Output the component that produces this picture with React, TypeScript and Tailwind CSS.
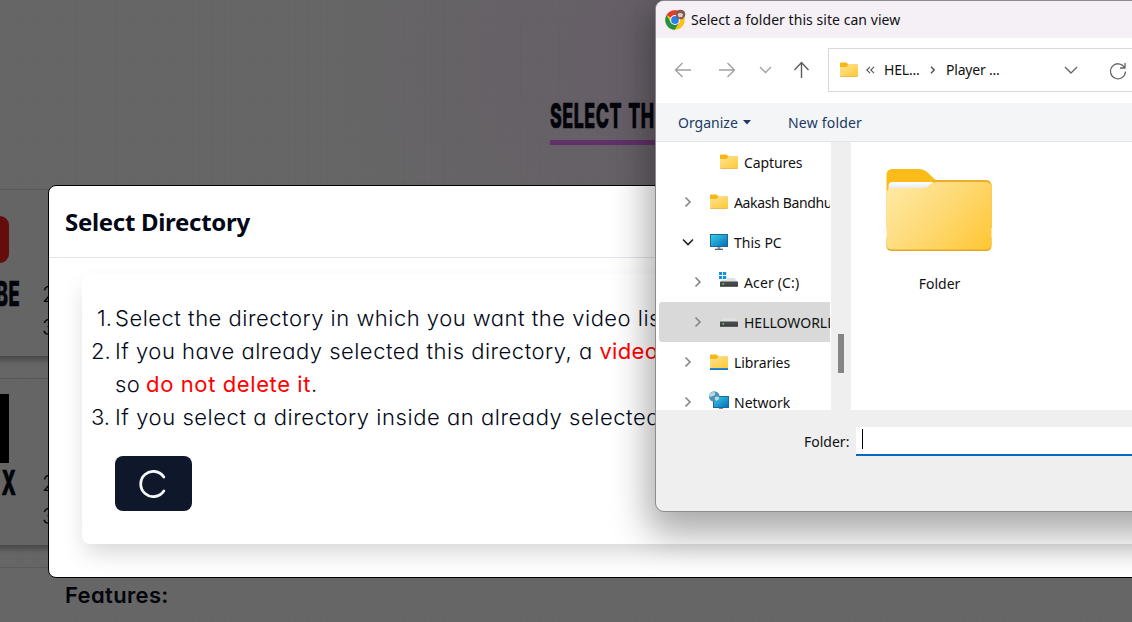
import React from 'react';

const ui = "font-['Noto_Sans','Open_Sans',sans-serif]";
const geo = "font-['Inter',sans-serif]";

function SmallFolder({ library = false }: { library?: boolean }) {
  return (
    <svg width="19" height="16" viewBox="0 0 19 16" className="shrink-0">
      <defs>
        <linearGradient id="sf" x1="0" y1="0" x2="1" y2="1">
          <stop offset="0" stopColor="#ffe391" />
          <stop offset="1" stopColor="#fdc936" />
        </linearGradient>
      </defs>
      <path d="M0 1.5Q0 .5 1 .5h5.500l2 2H17.500q.5 0 .5.5v3H0z" fill="#f7b71a" />
      <path d="M0 5h6.500l2-2.200H18V13q0 1-1 1H1q-1 0-1-1z" fill="url(#sf)" />
      <path d="M0 13q0 1 1 1h16q1 0 1-1v.9q0 .8-1 .8H1q-1 0-1-.8z" fill="#e3a21f" />
      {library && <path d="M0 14.200h18V16H0z" fill="#0a78d0" />}
    </svg>
  );
}

function BigFolder() {
  return (
    <svg width="108" height="86" viewBox="0 0 108 86">
      <defs>
        <linearGradient id="bf" gradientUnits="userSpaceOnUse" x1="10" y1="10" x2="95" y2="88">
          <stop offset="0" stopColor="#ffe9a5" />
          <stop offset=".5" stopColor="#fed973" />
          <stop offset="1" stopColor="#ffc735" />
        </linearGradient>
        <linearGradient id="bp" x1="0" y1="0" x2="0" y2="1">
          <stop offset="0" stopColor="#ffffff" />
          <stop offset="1" stopColor="#dfe3e8" />
        </linearGradient>
      </defs>
      <path d="M.5 7q0-6 6-6h27q4 0 7 2.500l8 7.500q2 1.500 5 1.500h46q6 0 6 6V60H.5z" fill="#fbbb18" />
      <path d="M47 12h53q5 0 5.500 5.500V60H40z" fill="#ebad2b" />
      <path d="M2.500 18q0-4 4-4h41l-9 8h-36z" fill="url(#bp)" />
      <path d="M.5 70h105v7.500q0 5.500-5.500 5.500H6q-5.500 0-5.500-5.500z" fill="#e6a626" />
      <path d="M.5 26q0-6 6-6h30q4 0 6-2l3-2.200q2-1.800 5-1.800h49q6 0 6 6v56q0 5.500-5.500 5.500H6q-5.500 0-5.500-5.500z" fill="url(#bf)" />
    </svg>
  );
}

function Monitor() {
  return (
    <svg width="19" height="17" viewBox="0 0 19 17" className="shrink-0">
      <defs>
        <linearGradient id="mon" x1="0" y1="0" x2="1" y2="1">
          <stop offset="0" stopColor="#35d3e4" />
          <stop offset="1" stopColor="#0c68bd" />
        </linearGradient>
      </defs>
      <rect x=".5" y=".5" width="17" height="12" fill="url(#mon)" stroke="#17699a" />
      <path d="M7.500 13h3v2h-3z" fill="#8d9aa5" />
      <path d="M5 14.800h8v1.200H5z" fill="#58656f" />
    </svg>
  );
}

function Drive({ windows = false }: { windows?: boolean }) {
  return (
    <svg width="19" height="18" viewBox="0 0 19 18" className="-mt-1 shrink-0 overflow-visible">
      <path d="M3.500 7h11l3.500 4H0z" fill="#dfe2e5" />
      <rect x="0" y="10.500" width="18" height="5" rx=".6" fill="#47494b" />
      <path d="M0 14.500h18v1H0z" fill="#2f3133" />
      <rect x="2.500" y="12.200" width="1.600" height="1.600" fill="#55e05c" />
      {windows && (
        <g>
          <rect x="-1" y="0" width="8" height="9" fill="#fff" />
          <path d="M-1 1h3.200v3H-1zM3 1h3.200v3H3zM-1 5h3.200v3H-1zM3 5h3.200v3H3z" fill="#1490df" />
        </g>
      )}
    </svg>
  );
}

function NetworkIcon() {
  return (
    <svg width="20" height="18" viewBox="0 0 20 18" className="-ml-px -mt-1 shrink-0">
      <defs>
        <linearGradient id="net" x1="0" y1="0" x2="1" y2="1">
          <stop offset="0" stopColor="#35d3e4" />
          <stop offset="1" stopColor="#0c68bd" />
        </linearGradient>
      </defs>
      <rect x="4.500" y="5.500" width="15" height="11" fill="url(#net)" stroke="#17699a" />
      <rect x="10" y="17" width="4" height="1" fill="#7a8792" />
      <circle cx="5.300" cy="5.500" r="5.300" fill="#4e92b5" />
      <path d="M2 2q3-2 4 0t-2 3-3 1-1-2zM6 6q3-1 4 .5T7 10Q5 8 6 6z" fill="#b9dbe8" />
    </svg>
  );
}

function ChromeIcon() {
  return (
    <svg width="22" height="22" viewBox="0 0 22 22" className="shrink-0">
      <circle cx="10" cy="11" r="9.800" fill="#fbc116" />
      <path d="M10 11 1.500 6.100A9.800 9.800 0 0 1 18.500 6.100H10z" fill="#e33b2e" />
      <path d="M1.500 6.100A9.800 9.800 0 0 0 9.800 20.800L14.200 13.300 10 11 5.800 13.400z" fill="#229342" />
      <circle cx="10" cy="11" r="4.900" fill="#fff" />
      <circle cx="10" cy="11" r="3.900" fill="#2f7de9" />
      <circle cx="15.500" cy="5.500" r="4.800" fill="#7b5b50" />
      <path d="M12 3q2-2 5-1.500t3 3q-2-1-4-.5t-3 1.500z" fill="#8a5a4c" />
      <path d="M12.500 5q2.500-2 5.500 0-.5 4-2.500 4t-3-4z" fill="#dccdc5" />
      <path d="M14 8h3l-1 1.500z" fill="#b3463c" />
    </svg>
  );
}

function Chevron({ down = false, color = '#858585' }: { down?: boolean; color?: string }) {
  return (
    <svg width="12" height="12" viewBox="0 0 12 12" fill="none" stroke={color} strokeWidth="1.600" className="shrink-0">
      <path d={down ? 'M1 3.500 6 8.500 11 3.500' : 'M3.500 1.500 8 6 3.500 10.500'} />
    </svg>
  );
}

function TreeRow({ pad, open, icon, label, active, chevron = true, track = '' }: {
  pad: string; open?: boolean; icon: React.ReactNode; label: string; active?: boolean; chevron?: boolean; track?: string;
}) {
  return (
    <div className={`flex h-10 shrink-0 items-center overflow-hidden whitespace-nowrap ${pad} ${active ? 'rounded-l-[3px] bg-[#d9d9d9]' : ''}`}>
      <span className="flex w-7 shrink-0 items-center">{chevron && <Chevron down={open} color={open ? '#222' : '#858585'} />}</span>
      <span className="flex w-6 shrink-0 items-center">{icon}</span>
      <span className={`shrink-0 ${track}`}>{label}</span>
    </div>
  );
}

function FileDialog() {
  return (
    <div className={`absolute left-[656px] top-px h-[510px] w-[520px] overflow-hidden rounded-lg bg-[#efefef] text-[14px] text-[#111] shadow-[0_0_0_1px_#8c8c8c,0_14px_36px_8px_rgba(0,0,0,0.34)] ${ui}`}>
      <div className="flex h-[37px] items-center gap-1 bg-[#f5eff6] pl-[9px]">
        <ChromeIcon />
        <span className="whitespace-nowrap tracking-[0.05px]">Select a folder this site can view</span>
      </div>
      <div className="flex h-[65px] items-center bg-white pb-[2px]">
        <svg width="172" height="24" viewBox="0 0 172 24" fill="none" strokeWidth="1.400" className="shrink-0">
          <g stroke="#a0a0a0">
            <path d="M35 12H20M26.500 5 19.500 12l7 7" />
            <path d="M63 12h15M71.500 5l7 7-7 7" />
            <path d="m104 9 5.500 5.500L115 9" />
          </g>
          <path d="M145.500 20V5M138.500 12l7-7.500 7 7.500" stroke="#5d5d5d" />
        </svg>
        <div className="flex h-11 w-[348px] shrink-0 items-center border border-[#d9d9d9]">
          <span className="flex w-[37px] pl-[11px]"><SmallFolder /></span>
          <svg width="9" height="8" viewBox="0 0 9 8" fill="none" stroke="#555" strokeWidth="1.100"><path d="M4 .8.800 4 4 7.200M8 .8 4.800 4 8 7.200" /></svg>
          <span className="ml-[9px] w-[46px] tracking-[-0.2px]">HEL...</span>
          <svg width="6" height="8" viewBox="0 0 6 8" fill="none" stroke="#555" strokeWidth="1.500"><path d="m1 .8 3.200 3.200L1 7.200" /></svg>
          <span className="ml-[10px] w-[118px] tracking-[-0.2px]">Player ...</span>
          <svg width="14" height="10" viewBox="0 0 14 10" fill="none" stroke="#666" strokeWidth="1.400" className="mt-px"><path d="m1 2 6 6 6-6" /></svg>
          <svg width="18" height="18" viewBox="0 0 18 18" fill="none" stroke="#666" strokeWidth="1.300" className="ml-[31px] mt-[2px]"><path d="M15.500 5.500A7.500 7.500 0 1 0 16.500 9.500M16 1v5h-5" /></svg>
        </div>
      </div>
      <div className="flex h-[39px] items-center border-b border-[#e3e5e8] bg-[#f4f5f7] pl-[22px] text-[#203a63]">
        <span className="w-[65px]">Organize</span>
        <svg width="8" height="5"><path d="M0 0h8L4 4.500z" fill="#203a63" /></svg>
        <span className="ml-[37px] tracking-[0.2px]">New folder</span>
      </div>
      <div className="flex h-[268px] bg-white">
        <div className="flex w-[175px] flex-col overflow-hidden pl-[3px] pr-px">
          <TreeRow pad="pl-[33px]" chevron={false} icon={<SmallFolder />} label="Captures" track="tracking-[-0.1px]" />
          <TreeRow pad="pl-[23px]" icon={<SmallFolder />} label="Aakash Bandhu" track="tracking-[-0.35px]" />
          <TreeRow pad="pl-[23px]" open icon={<Monitor />} label="This PC" />
          <TreeRow pad="pl-[33px]" icon={<Drive windows />} label="Acer (C:)" track="tracking-[0.15px]" />
          <TreeRow pad="pl-[33px]" active icon={<Drive />} label="HELLOWORLD" />
          <TreeRow pad="pl-[23px]" icon={<SmallFolder library />} label="Libraries" track="tracking-[-0.1px]" />
          <TreeRow pad="pl-[23px]" icon={<NetworkIcon />} label="Network" />
        </div>
        <div className="w-5 bg-[#efefef] pl-[7px] pt-[192px]">
          <div className="h-[39px] w-[6px] bg-[#858585]" />
        </div>
        <div className="flex w-[177px] flex-col items-center pt-[26px]">
          <BigFolder />
          <span className="mt-[19px]">Folder</span>
        </div>
      </div>
      <div className="flex items-center pt-[17px]">
        <span className="w-[200px] pl-[148px]">Folder:</span>
        <div className="h-[29px] w-[320px] border-b-2 border-[#0867c0] bg-white pl-[6px] pt-[2px]">
          <div className="h-5 w-px bg-black" />
        </div>
      </div>
    </div>
  );
}

function ProviderCard({ icon, name, nameClass }: { icon: string; name: string; nameClass: string }) {
  return (
    <div className="h-[167px] w-20 border-t border-[#585858] bg-[#656565] shadow-[0_5px_6px_-1px_rgba(0,0,0,0.3)]">
      <div className="relative h-full">
        <div className={icon} />
        <div className={nameClass}>{name}</div>
        <div className={`absolute left-[58px] top-[88px] text-[22px] font-light leading-[33px] text-[#02040a] ${geo}`}>2.<br />3.</div>
      </div>
    </div>
  );
}

function Modal() {
  return (
    <div className="absolute left-12 top-[185px] h-[393px] w-[1200px] rounded-lg border border-black bg-white text-[#020817]">
      <h2 className={`h-[72px] border-b border-[#e2e4ec] pl-4 pt-[18px] text-[24px] font-bold leading-9 ${ui}`}>
        <span className="tracking-[-0.3px]">Select Directory</span>
      </h2>
      <div className={`ml-[33px] mt-4 h-[270px] rounded-lg bg-white pl-[33px] pt-[28px] text-[22px] font-light leading-[33px] shadow-[0_12px_24px_-4px_rgba(0,0,0,0.17)] ${geo} [font-feature-settings:'cv11']`}>
        <ol className="whitespace-nowrap tracking-[0.5px]">
          <li className="flex"><span className="-ml-6 w-6 pl-[6px] tracking-normal">1.</span><span>Select the directory in which you want the video list</span></li>
          <li className="flex"><span className="-ml-6 w-6 tracking-normal">2.</span><span>If you have already selected this directory, a <span className="font-normal tracking-[0.3px] text-[#f00]">video.json</span><br />so <span className="-ml-px font-normal tracking-[0.6px] text-[#f00]">do not delete it</span>.</span></li>
          <li className="flex"><span className="-ml-6 w-6 tracking-normal">3.</span><span className="tracking-[0.55px]">If you select a directory inside an already selected one</span></li>
        </ol>
        <button className="mt-[22px] flex h-[55px] w-[77px] items-center justify-center rounded-lg bg-[#0f172a]">
          <svg width="28" height="28" viewBox="0 0 28 28" fill="none" stroke="#f4f6f8" strokeWidth="2.800" strokeLinecap="round" className="-ml-[2px]"><path d="M24.800 7A12.600 12.600 0 1 0 24.800 21" /></svg>
        </button>
      </div>
    </div>
  );
}

export default function App() {
  return (
    <div className="relative h-[622px] w-[1132px] overflow-hidden bg-[#666]">
      <div className="absolute inset-0 bg-[radial-gradient(ellipse_at_760px_60px,#6b606d_0px,#665f67_180px,#666_430px)]" />
      <div className="absolute inset-0 bg-[repeating-linear-gradient(90deg,transparent_0px,transparent_18.300px,rgba(0,0,0,0.02)_18.300px,rgba(0,0,0,0.02)_19.300px)]" />
      <div className="absolute inset-0 bg-[repeating-linear-gradient(180deg,transparent_0px,transparent_17px,rgba(0,0,0,0.025)_17px,rgba(0,0,0,0.025)_18px,transparent_18px,transparent_41.600px)]" />
      <h1 className={`absolute left-[550px] top-[96px] h-[49px] w-[240px] border-b-[5px] border-[#603068] text-[#02040a] ${geo}`}>
        <span className="inline-block origin-left scale-x-[0.525] whitespace-nowrap text-[34px] font-extrabold leading-10 tracking-[1px] [word-spacing:3px] [-webkit-text-stroke:0.6px_#02040a]">SELECT THE</span>
      </h1>
      <div className="absolute -left-4 top-[189px] flex flex-col gap-[22px]">
        <ProviderCard
          icon="absolute left-0 top-[26px] h-[47px] w-[25px] rounded-r-[9px] bg-[#650d0d]"
          name="BE"
          nameClass="absolute right-[44px] top-[84px] origin-right scale-x-[0.54] text-[34px] font-extrabold leading-10 tracking-[1px] text-[#02040a] font-['Inter',sans-serif] [-webkit-text-stroke:0.6px_#02040a]"
        />
        <ProviderCard
          icon="absolute left-0 top-[15px] h-[69px] w-[25px] bg-black"
          name="X"
          nameClass="absolute right-[48px] top-[84px] origin-right scale-x-[0.56] text-[34px] font-extrabold leading-10 text-[#02040a] font-['Inter',sans-serif] [-webkit-text-stroke:0.6px_#02040a]"
        />
      </div>
      <div className="absolute left-0 top-[567px] w-full border-t border-[#5b5b5b] bg-[#666] pl-[65px] pt-[11px] text-[22px] font-semibold leading-[33px] tracking-[0.35px] text-[#020409] font-['Inter',sans-serif] [font-feature-settings:'cv11']">Features:</div>
      <Modal />
      <FileDialog />
    </div>
  );
}
